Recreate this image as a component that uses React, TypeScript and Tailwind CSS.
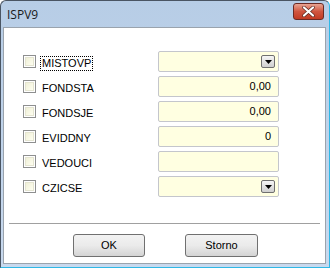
const ROWS = [
  { name: "MISTOVP", kind: "combo", value: "", focus: true },
  { name: "FONDSTA", kind: "text", value: "0,00" },
  { name: "FONDSJE", kind: "text", value: "0,00" },
  { name: "EVIDDNY", kind: "text", value: "0" },
  { name: "VEDOUCI", kind: "text", value: "" },
  { name: "CZICSE", kind: "combo", value: "" },
]

function DropButton() {
  return (
    <div className="w-[14px] h-[13px] rounded-[2px] border border-[#6f6f6f] bg-gradient-to-b from-[#f6f6f6] to-[#cfcfcf] flex items-center justify-center">
      <svg width="7" height="4" viewBox="0 0 7 4">
        <path d="M0 0h7L3.5 4z" fill="#000" />
      </svg>
    </div>
  )
}

function CloseButton() {
  return (
    <div className="w-[31px] h-[17px] rounded-[3px] border border-[#6b2a24] bg-gradient-to-b from-[#e8a493] via-[#d0553f] to-[#c23a22] flex items-center justify-center">
      <svg width="13" height="11" viewBox="0 0 13 11">
        <path d="M2 1.5L11 9.5M11 1.5L2 9.5" stroke="#5a2a22" strokeWidth="3.6" strokeLinecap="round" />
        <path d="M2 1.5L11 9.5M11 1.5L2 9.5" stroke="#fff" strokeWidth="2.2" strokeLinecap="round" />
      </svg>
    </div>
  )
}

export default function App() {
  return (
    <div className="w-[330px] h-[268px] bg-white" style={{ fontFamily: "'Liberation Sans', Arial, sans-serif" }}>
      <div className="w-full h-full flex flex-col rounded-t-[6px] border border-[#4a5563] border-r-[#2fb8e6] border-b-[#2fb8e6] bg-gradient-to-b from-[#b7cde6] to-[#c8d9ee] overflow-hidden">
        {/* Title bar */}
        <div className="h-[26px] flex items-center justify-between pl-[6px] pr-[5px] shrink-0">
          <span className="text-[12px] text-[#1a1a1a] pt-[1px]" style={{ fontFamily: "'Open Sans', 'Liberation Sans', sans-serif" }}>ISPV9</span>
          <div className="-mt-[5px]">
            <CloseButton />
          </div>
        </div>

        {/* Client area */}
        <div className="flex-1 ml-[2px] mr-[3px] mb-[3px] border border-[#9aa3ad] bg-white flex flex-col">
          <div className="pt-[23px] pl-[19px] flex flex-col gap-[4px]">
            {ROWS.map((r) => (
              <div key={r.name} className="h-[21px] flex items-center">
                <div className="w-[13px] h-[13px] border border-[#8e8f8f] bg-white p-[1px] shrink-0">
                  <div className="w-full h-full bg-gradient-to-br from-[#f0f0d8] to-[#fefef0] border border-[#e4e4d0]" />
                </div>
                <div className="w-[117px] ml-[5px]">
                  <span
                    className={
                      "inline-block text-[11px] leading-[13px] text-[#000] px-[1px] " +
                      (r.focus ? "outline outline-1 outline-dotted outline-[#000]" : "")
                    }
                  >
                    {r.name}
                  </span>
                </div>
                <div className="w-[121px] h-[21px] rounded-[2px] border border-[#c4c6cc] bg-[#ffffe1] flex items-center justify-end pr-[7px]">
                  {r.kind === "combo" ? (
                    <div className="-mr-[4px]">
                      <DropButton />
                    </div>
                  ) : (
                    <span className="text-[11px] text-[#000]">{r.value}</span>
                  )}
                </div>
              </div>
            ))}
          </div>

          <div className="mt-[26px] mx-[5px] h-[2px] border-t border-[#a0a0a0] border-b border-b-white" />

          <div className="mt-[9px] flex justify-center gap-[40px] pl-[2px]">
            <button className="w-[72px] h-[23px] rounded-[3px] border border-[#707070] bg-gradient-to-b from-[#f2f2f2] via-[#ebebeb] to-[#d4d4d4] text-[11px] text-[#000]">
              OK
            </button>
            <button className="w-[73px] h-[23px] rounded-[3px] border border-[#707070] bg-gradient-to-b from-[#f2f2f2] via-[#ebebeb] to-[#d4d4d4] text-[11px] text-[#000]">
              Storno
            </button>
          </div>
        </div>
      </div>
    </div>
  )
}
